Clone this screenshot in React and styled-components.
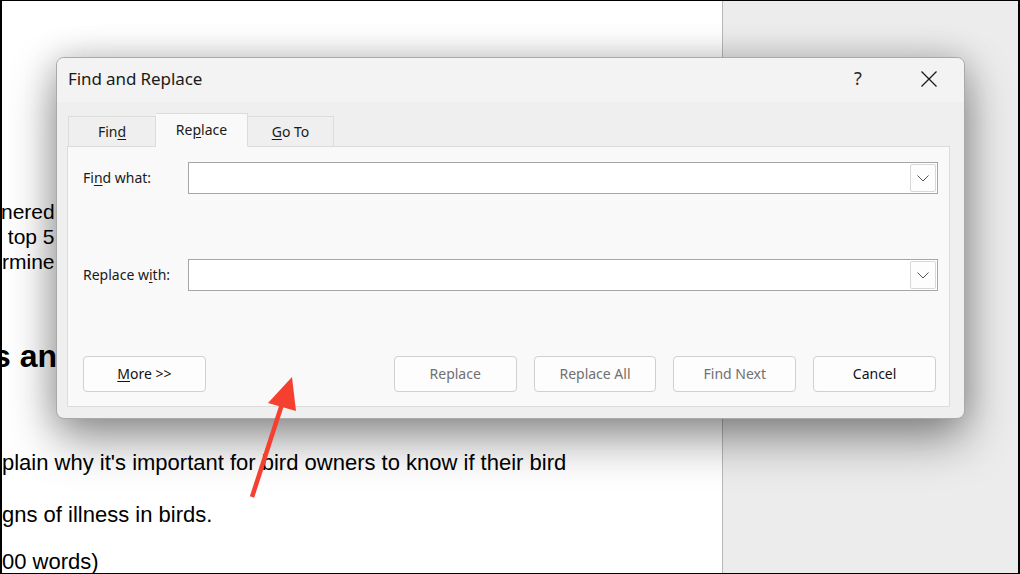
import React from 'react';
import styled, { createGlobalStyle } from 'styled-components';

const GlobalStyle = createGlobalStyle`
  html, body { margin: 0; padding: 0; background: #fff; }
  body { width: 1020px; height: 574px; overflow: hidden; }
  * { box-sizing: border-box; }
`;

const Screen = styled.div`
  position: relative;
  width: 1020px;
  height: 574px;
  border-style: solid;
  border-color: #000;
  border-width: 1px 2px 1px 2px;
  display: flex;
  overflow: hidden;
  background: #fff;
`;

const Page = styled.div`
  flex: none;
  width: 721px;
  background: #fff;
  border-right: 1px solid #b9b9b9;
  overflow: hidden;
  padding-top: 198px;
  font-family: "Liberation Sans", Arial, sans-serif;
  color: #000;
`;

const Side = styled.div`
  flex: 1;
  background: #ececec;
`;

const DocLine = styled.p`
  margin: ${(p) => p.$top || 0}px 0 0 ${(p) => p.$shift || 0}px;
  font-size: ${(p) => p.$size || 21}px;
  line-height: ${(p) => (p.$heading ? 40 : 25)}px;
  font-weight: ${(p) => (p.$heading ? 700 : 400)};
  white-space: pre;
`;

const Dialog = styled.div`
  position: absolute;
  left: 54px;
  top: 56px;
  width: 909px;
  height: 362px;
  border: 1px solid #a9a9a9;
  border-radius: 8px;
  background: #efefef;
  box-shadow: 0 20px 48px rgba(0, 0, 0, 0.42), 0 0 32px rgba(0, 0, 0, 0.17);
  display: flex;
  flex-direction: column;
  overflow: hidden;
  font-family: "Noto Sans", "Open Sans", sans-serif;
  color: #1a1a1a;
`;

const TitleBar = styled.div`
  height: 44px;
  flex: none;
  background: #f3f3f3;
  display: flex;
  align-items: center;
  padding: 0 0 0 11px;
`;

const Title = styled.div`
  flex: 1;
  font-size: 17px;
  letter-spacing: -0.1px;
  padding-bottom: 4px;
`;

const Help = styled.div`
  width: 18px;
  text-align: center;
  font-size: 18px;
  color: #2a2a2a;
  margin-right: 54px;
  padding-bottom: 4px;
`;

const CloseBtn = styled.div`
  width: 16px;
  height: 16px;
  margin-right: 27px;
  margin-bottom: 2px;
  display: flex;
`;

const Body = styled.div`
  flex: 1;
  display: flex;
  flex-direction: column;
  padding: 12px 14px 11px 10px;
`;

const Tabs = styled.div`
  display: flex;
  align-items: flex-end;
  margin-left: 1px;
  height: 33px;
  position: relative;
  z-index: 1;
  margin-bottom: -1px;
`;

const Tab = styled.div`
  width: ${(p) => p.$w}px;
  height: ${(p) => (p.$active ? 34 : 31)}px;
  display: flex;
  align-items: center;
  justify-content: center;
  font-size: 14px;
  background: ${(p) => (p.$active ? '#f9f9f9' : '#efefef')};
  border: 1px solid #dcdcdc;
  border-bottom: ${(p) => (p.$active ? '1px solid #f9f9f9' : '1px solid #dcdcdc')};
  border-left-width: ${(p) => (p.$noLeft ? 0 : 1)}px;
  padding-bottom: ${(p) => (p.$active ? 2 : 1)}px;
  color: #1a1a1a;
`;

const Panel = styled.div`
  flex: 1;
  background: #f9f9f9;
  border: 1px solid #dcdcdc;
  display: flex;
  flex-direction: column;
  padding: 15px 11px 14px 15px;
`;

const FieldRow = styled.div`
  display: flex;
  align-items: center;
  height: 32px;
  margin-top: ${(p) => p.$top || 0}px;
`;

const Label = styled.div`
  width: 105px;
  flex: none;
  font-size: 14px;
  color: #1a1a1a;
  padding-bottom: 1px;
`;

const Combo = styled.div`
  flex: 1;
  height: 32px;
  background: #fff;
  border: 1px solid #a6a6a6;
  display: flex;
  justify-content: flex-end;
  align-items: center;
  padding-right: 1px;
`;

const DropBtn = styled.div`
  width: 26px;
  height: 28px;
  border: 1px solid #d8d8d8;
  border-radius: 2px;
  background: #fdfdfd;
  display: flex;
  align-items: center;
  justify-content: center;
`;

const ButtonRow = styled.div`
  display: flex;
  align-items: center;
  margin-top: auto;
  padding-right: 2px;
  gap: 17px;
`;

const Button = styled.div`
  width: 123px;
  height: 36px;
  border: 1px solid #d0d0d0;
  border-radius: 4px;
  background: #fdfdfd;
  display: flex;
  align-items: center;
  justify-content: center;
  font-size: 14px;
  padding-bottom: 1px;
  color: ${(p) => (p.$disabled ? '#707070' : '#111')};
  margin-right: ${(p) => p.$push || 0}px;
`;

const Key = styled.span`
  text-decoration: underline;
  text-underline-offset: 2px;
`;

const Overlay = styled.svg`
  position: absolute;
  left: -2px;
  top: -1px;
  width: 1020px;
  height: 574px;
  pointer-events: none;
`;

const Chevron = () => (
  <svg width="12" height="7" viewBox="0 0 12 7">
    <polyline points="0.5,0.5 6,6 11.5,0.5" fill="none" stroke="#555" strokeWidth="1" />
  </svg>
);

export default function App() {
  return (
    <>
      <GlobalStyle />
      <Screen>
        <Page>
          <DocLine $shift={-1}>nered</DocLine>
          <DocLine>{' top 5'}</DocLine>
          <DocLine $shift={0}>rmine</DocLine>
          <DocLine $heading $size={32} $top={62} $shift={-9}>s an</DocLine>
          <DocLine $size={22} $top={74} $shift={0}>plain why it's important for bird owners to know if their bird</DocLine>
          <DocLine $size={22} $top={27} $shift={0}>gns of illness in birds.</DocLine>
          <DocLine $size={22} $top={22} $shift={0}>00 words)</DocLine>
        </Page>
        <Side />
        <Dialog>
          <TitleBar>
            <Title>Find and Replace</Title>
            <Help>?</Help>
            <CloseBtn>
              <svg width="16" height="16" viewBox="0 0 16 16">
                <path d="M0.5 0.5 L15.5 15.5 M15.5 0.5 L0.5 15.5" stroke="#1a1a1a" strokeWidth="1.3" fill="none" />
              </svg>
            </CloseBtn>
          </TitleBar>
          <Body>
            <Tabs>
              <Tab $w={88}>
                <span>Fin<Key>d</Key></span>
              </Tab>
              <Tab $w={92} $active $noLeft>
                <span>Re<Key>p</Key>lace</span>
              </Tab>
              <Tab $w={86} $noLeft>
                <span><Key>G</Key>o To</span>
              </Tab>
            </Tabs>
            <Panel>
              <FieldRow>
                <Label>Fi<Key>n</Key>d what:</Label>
                <Combo>
                  <DropBtn><Chevron /></DropBtn>
                </Combo>
              </FieldRow>
              <FieldRow $top={65}>
                <Label>Replace w<Key>i</Key>th:</Label>
                <Combo>
                  <DropBtn><Chevron /></DropBtn>
                </Combo>
              </FieldRow>
              <ButtonRow>
                <Button $push={171}><span><Key>M</Key>ore &gt;&gt;</span></Button>
                <Button $disabled>Replace</Button>
                <Button $disabled>Replace All</Button>
                <Button $disabled>Find Next</Button>
                <Button>Cancel</Button>
              </ButtonRow>
            </Panel>
          </Body>
        </Dialog>
        <Overlay viewBox="0 0 1020 574">
          <line x1="252" y1="497" x2="284" y2="398" stroke="#f5402f" strokeWidth="4.5" strokeLinecap="butt" />
          <polygon points="292,377 268,403 296,411" fill="#f5402f" />
        </Overlay>
      </Screen>
    </>
  );
}
